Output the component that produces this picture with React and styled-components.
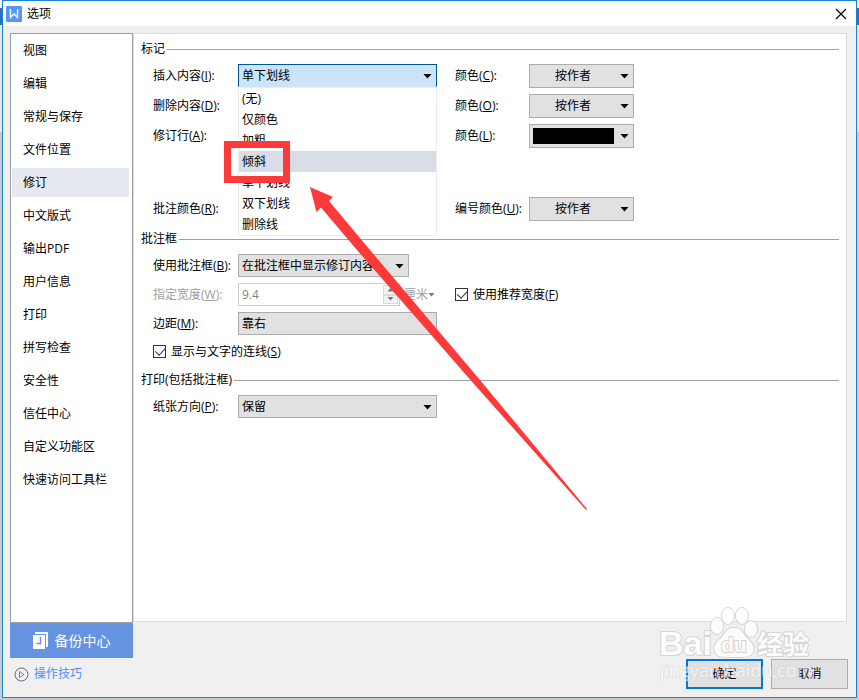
import React, { useState } from 'react';
import styled, { createGlobalStyle } from 'styled-components';

const GlobalStyle = createGlobalStyle`
  * {
    box-sizing: border-box;
  }

  body {
    margin: 0;
  }

  body, button, input, select {
    font-family: "Open Sans", "Noto Sans CJK SC", sans-serif;
    font-size: 12px;
    line-height: 16px;
    color: #000;
  }
`;

const Desktop = styled.div`
  display: flex;
  flex-direction: column;
  min-height: 100vh;
  padding: 0 2px 2px;
  background: linear-gradient(#eef1f5 8px, #2b6cc4 8px, #2b6cc4 25px, #e3e8ee 25px, #e3e8ee 132px, #c6cbd1 132px);
`;

const Window = styled.div`
  position: relative;
  flex: 1;
  display: flex;
  flex-direction: column;
  border: 1px solid #1883d7;
  background: #f0f0f0;
`;

const TitleBar = styled.header`
  display: flex;
  align-items: center;
  gap: 5px;
  height: 25px;
  padding: 0 9px 0 3px;
  background: #fff;
`;

const Title = styled.h1`
  flex: 1;
  margin: 0;
  font-size: 12px;
  font-weight: 400;
`;

const CloseButton = styled.button`
  display: flex;
  padding: 0;
  border: 0;
  background: transparent;
`;

const Body = styled.div`
  flex: 1;
  display: grid;
  grid-template-columns: 123px 1fr;
  grid-template-rows: 1fr auto;
  padding: 7px 9px 8px 7px;
`;

const Sidebar = styled.nav`
  display: flex;
  flex-direction: column;
  gap: 4px;
  padding: 2px 3px 2px 1px;
  border: 1px solid #a0a0a0;
  background: #fff;
`;

const SidebarItem = styled.button`
  height: 29px;
  padding: 0 11px;
  border: 0;
  background: ${(props) => (props.$active ? '#e6eaf0' : 'transparent')};
  text-align: left;
`;

const Panel = styled.main`
  margin-bottom: 1px;
  padding: 7px;
  border: 1px solid #dcdcdc;
  background: #fff;
`;

const Group = styled.section`
  margin-bottom: 10px;
`;

const GroupTitle = styled.h2`
  display: flex;
  align-items: center;
  gap: 2px;
  height: 16px;
  margin: 0 0 7px;
  font-size: 12px;
  font-weight: 400;
  white-space: nowrap;

  &::after {
    content: '';
    flex: 1;
    height: 1px;
    background: #a0a0a0;
  }
`;

const Rows = styled.div`
  display: flex;
  flex-direction: column;
  gap: 6px;
  padding-left: 12px;
`;

const Row = styled.div`
  display: grid;
  grid-template-columns: 85px 199px 92px 105px;
  align-items: start;
  height: ${(props) => props.$height || 23}px;
  margin-top: ${(props) => props.$space || 0}px;
`;

const Label = styled.label`
  line-height: 23px;
  padding-left: ${(props) => (props.$second ? 18 : 0)}px;
  color: ${(props) => (props.$disabled ? '#a0a0a0' : '#000')};
  white-space: nowrap;
`;

const ComboBox = styled.div`
  position: relative;
  width: ${(props) => props.$width};

  > svg {
    position: absolute;
    right: 5px;
    top: 10px;
    pointer-events: none;
  }
`;

const Select = styled.select`
  display: block;
  appearance: none;
  width: 100%;
  height: ${(props) => (props.$centered ? 24 : 23)}px;
  padding: 0 16px 0 ${(props) => (props.$centered ? 25 : 3)}px;
  border: 1px solid #adadad;
  border-radius: 0;
  background: #e1e1e1;
  outline: none;

  &[data-open] {
    border-color: #005499;
    border-bottom-color: #cce4f7;
    background: #cce4f7;
  }
`;

const SwatchButton = styled.button`
  display: block;
  width: 100%;
  height: 24px;
  padding: 3px;
  border: 1px solid #adadad;
  background: #e1e1e1;
`;

const Swatch = styled.span`
  display: block;
  width: 81px;
  height: 16px;
  background: #000;
`;

const Menu = styled.ul`
  position: absolute;
  z-index: 1;
  top: 100%;
  left: 0;
  right: 0;
  margin: 0;
  padding: 0;
  border: 1px solid #ececec;
  background: #fff;
  list-style: none;
`;

const MenuItem = styled.li`
  height: 21px;
  padding-left: 3px;
  line-height: 21px;
  background: ${(props) => (props.$hover ? '#d9dde5' : '#fff')};
`;

const SpinRow = styled.div`
  display: flex;
  align-items: center;
  gap: 4px;
`;

const SpinBox = styled.div`
  display: flex;
  width: 162px;
  height: 23px;
  padding: 1px;
  border: 1px solid #ccc;
`;

const SpinInput = styled.input`
  flex: 1;
  min-width: 0;
  padding: 0 2px;
  border: 0;
  background: #fff;
  color: #838383;
`;

const SpinButtons = styled.div`
  display: grid;
  width: 15px;
`;

const SpinButton = styled.button`
  display: flex;
  align-items: center;
  justify-content: center;
  padding: 0;
  border: 1px solid #dadada;
  background: #f3f3f3;
`;

const UnitButton = styled.button`
  display: flex;
  align-items: center;
  padding: 0;
  border: 0;
  background: transparent;
  color: #a0a0a0;
`;

const CheckLabel = styled.label`
  display: flex;
  align-items: center;
  gap: 5px;
  height: ${(props) => (props.$second ? 23 : 21)}px;
  padding-left: ${(props) => (props.$second ? 18 : 0)}px;
  white-space: nowrap;
`;

const Checkbox = styled.input`
  appearance: none;
  flex: none;
  position: relative;
  width: 13px;
  height: 13px;
  margin: 0;
  border: 1px solid #333;
  background: #fff;

  &:checked::after {
    content: '';
    position: absolute;
    left: 3px;
    top: 0;
    width: 5px;
    height: 8px;
    border: solid #333;
    border-width: 0 1px 1px 0;
    transform: rotate(42deg);
  }
`;

const SideFooter = styled.div`
  display: flex;
  flex-direction: column;
  align-items: flex-start;
  gap: 8px;
  padding-bottom: 7px;
`;

const BackupButton = styled.button`
  display: flex;
  align-items: center;
  justify-content: center;
  gap: 6px;
  width: 100%;
  height: 35px;
  padding: 0;
  border: 0;
  background: #6593e1;
  color: #fff;
  font-size: 14px;
`;

const TipsLink = styled.a`
  display: flex;
  align-items: center;
  gap: 5px;
  padding-left: 4px;
  color: #4a90f2;
  text-decoration: none;
`;

const Actions = styled.div`
  display: flex;
  justify-content: flex-end;
  align-items: flex-end;
  gap: 8px;
  margin-right: -1px;
`;

const ActionButton = styled.button`
  width: 77px;
  height: 30px;
  padding: 0;
  border: ${(props) => (props.$primary ? '2px solid #0078d7' : '1px solid #adadad')};
  background: #e1e1e1;
`;

const Highlight = styled.div`
  position: absolute;
  z-index: 2;
  top: 77px;
  left: -14px;
  width: 66px;
  height: 42px;
  border: 7px solid #fc3a3a;
  pointer-events: none;
`;

const Pointer = styled.svg`
  position: absolute;
  z-index: 3;
  left: 307px;
  top: 186px;
  pointer-events: none;
`;

const Watermark = styled.svg`
  position: absolute;
  z-index: 3;
  right: 34px;
  bottom: 7px;
  pointer-events: none;
`;

const Arrow = ({ color = '#000' }) => (
  <svg width="9" height="5" viewBox="0 0 9 5">
    <path d="M0.500 0h8L4.500 4.500z" fill={color} />
  </svg>
);

const SmallArrow = ({ up }) => (
  <svg width="7" height="4" viewBox="0 0 7 4">
    <path d={up ? 'M0.500 3.500h6L3.500 0z' : 'M0.500 0h6L3.500 3.500z'} fill="#777" />
  </svg>
);

const Logo = () => (
  <svg width="16" height="16" viewBox="0 0 16 16">
    <rect width="16" height="16" rx="1" fill="#5597f7" />
    <path d="M3.500 4h1.500M4.500 4v7.500L8 8l3.500 3.500V4M11 4h1.500" fill="none" stroke="#fff" strokeWidth="1.300" />
  </svg>
);

const Key = ({ letter }) => (
  <>
    (<u>{letter}</u>):
  </>
);

const Combo = ({ id, options = [], width = '100%', centered, children, ...rest }) => (
  <ComboBox $width={width}>
    <Select id={id} $centered={centered} {...rest}>
      {options.map((option) => (
        <option key={option}>{option}</option>
      ))}
    </Select>
    <Arrow />
    {children}
  </ComboBox>
);

const pages = [
  '视图', '编辑', '常规与保存', '文件位置', '修订', '中文版式', '输出PDF',
  '用户信息', '打印', '拼写检查', '安全性', '信任中心', '自定义功能区', '快速访问工具栏',
];

const insertStyles = ['(无)', '仅颜色', '加粗', '倾斜', '单下划线', '双下划线', '删除线'];

const App = () => {
  const [page, setPage] = useState('修订');
  const [hovered, setHovered] = useState('倾斜');

  return (
    <Desktop>
      <GlobalStyle />
      <Window>
        <TitleBar>
          <Logo />
          <Title>选项</Title>
          <CloseButton>
            <svg width="12" height="12" viewBox="0 0 12 12">
              <path d="M1 1l10 10M11 1L1 11" stroke="#000" strokeWidth="1.200" />
            </svg>
          </CloseButton>
        </TitleBar>

        <Body>
          <Sidebar>
            {pages.map((name) => (
              <SidebarItem key={name} $active={name === page} onClick={() => setPage(name)}>
                {name}
              </SidebarItem>
            ))}
          </Sidebar>

          <Panel>
            <Group>
              <GroupTitle>标记</GroupTitle>
              <Rows>
                <Row $height={24}>
                  <Label htmlFor="insert">插入内容<Key letter="I" /></Label>
                  <Combo id="insert" options={['单下划线']} data-open>
                    <Menu role="listbox">
                      {insertStyles.map((name) => (
                        <MenuItem
                          key={name}
                          role="option"
                          $hover={name === hovered}
                          onMouseEnter={() => setHovered(name)}
                        >
                          {name}
                        </MenuItem>
                      ))}
                    </Menu>
                    <Highlight />
                  </Combo>
                  <Label $second htmlFor="insertColor">颜色<Key letter="C" /></Label>
                  <Combo id="insertColor" options={['按作者']} centered />
                </Row>
                <Row $height={24}>
                  <Label htmlFor="remove">删除内容<Key letter="D" /></Label>
                  <Combo id="remove" />
                  <Label $second htmlFor="removeColor">颜色<Key letter="O" /></Label>
                  <Combo id="removeColor" options={['按作者']} centered />
                </Row>
                <Row $height={24}>
                  <Label htmlFor="line">修订行<Key letter="A" /></Label>
                  <Combo id="line" />
                  <Label $second htmlFor="lineColor">颜色<Key letter="L" /></Label>
                  <ComboBox $width="100%">
                    <SwatchButton id="lineColor">
                      <Swatch />
                    </SwatchButton>
                    <Arrow />
                  </ComboBox>
                </Row>
                <Row $height={24} $space={43}>
                  <Label htmlFor="comment">批注颜色<Key letter="R" /></Label>
                  <Combo id="comment" />
                  <Label $second htmlFor="numberColor">编号颜色<Key letter="U" /></Label>
                  <Combo id="numberColor" options={['按作者']} centered />
                </Row>
              </Rows>
            </Group>

            <Group>
              <GroupTitle>批注框</GroupTitle>
              <Rows>
                <Row>
                  <Label htmlFor="balloon">使用批注框<Key letter="B" /></Label>
                  <Combo id="balloon" options={['在批注框中显示修订内容']} width="171px" />
                </Row>
                <Row>
                  <Label $disabled htmlFor="width">指定宽度<Key letter="W" /></Label>
                  <SpinRow>
                    <SpinBox>
                      <SpinInput id="width" defaultValue="9.4" disabled />
                      <SpinButtons>
                        <SpinButton disabled><SmallArrow up /></SpinButton>
                        <SpinButton disabled><SmallArrow /></SpinButton>
                      </SpinButtons>
                    </SpinBox>
                    <UnitButton disabled>
                      厘米
                      <SmallArrow />
                    </UnitButton>
                  </SpinRow>
                  <CheckLabel $second>
                    <Checkbox type="checkbox" defaultChecked />
                    <span>使用推荐宽度(<u>F</u>)</span>
                  </CheckLabel>
                </Row>
                <Row>
                  <Label htmlFor="margin">边距<Key letter="M" /></Label>
                  <Combo id="margin" options={['靠右']} />
                </Row>
                <CheckLabel>
                  <Checkbox type="checkbox" defaultChecked />
                  <span>显示与文字的连线(<u>S</u>)</span>
                </CheckLabel>
              </Rows>
            </Group>

            <Group>
              <GroupTitle>打印(包括批注框)</GroupTitle>
              <Rows>
                <Row>
                  <Label htmlFor="paper">纸张方向<Key letter="P" /></Label>
                  <Combo id="paper" options={['保留']} />
                </Row>
              </Rows>
            </Group>
          </Panel>

          <SideFooter>
            <BackupButton>
              <svg width="16" height="18" viewBox="0 0 16 18">
                <path d="M2 0h13v15h-2V2H2z" fill="#fff" />
                <path d="M0 3h12v14H0z" fill="#fff" />
                <path d="M7.500 5v6.500H3.500" fill="none" stroke="#6593e1" strokeWidth="1.500" />
              </svg>
              备份中心
            </BackupButton>
            <TipsLink href="#tips">
              <svg width="15" height="15" viewBox="0 0 15 15" fill="none">
                <circle cx="7.500" cy="7.500" r="6.500" stroke="#6b6b6b" />
                <path d="M5.500 4.500v6l4.500-3z" stroke="#4a90f2" />
              </svg>
              操作技巧
            </TipsLink>
          </SideFooter>
          <Actions>
            <ActionButton $primary>确定</ActionButton>
            <ActionButton>取消</ActionButton>
          </Actions>
        </Body>

        <Pointer width="280" height="326" viewBox="310 187 280 326" fill="#fc3a3a">
          <path d="M310 187L333 197L329 201L370 250L480 380L587 509L586 510L474 384L357 250L321 207.500L316.500 212z" />
        </Pointer>

        <Watermark width="164" height="84" viewBox="0 0 164 84">
          <g fill="#fff" stroke="#cdcdcd" strokeWidth="2" opacity="0.800" paintOrder="stroke">
            <g fontFamily="Liberation Sans, sans-serif" fontWeight="700">
              <text x="1" y="49" fontSize="34">Bai</text>
              <path d="M76 22c7 0 9 5 13 10c5 5 8 8 6 14c-2 5-7 5-19 5s-17 0-19-5c-2-6 1-9 6-14c4-5 6-10 13-10z" />
              <ellipse cx="59" cy="20" rx="6" ry="8" />
              <ellipse cx="70" cy="10" rx="6" ry="8" />
              <ellipse cx="84" cy="10" rx="6" ry="8" />
              <ellipse cx="93" cy="23" rx="6" ry="8" />
              <text x="63" y="46" fontSize="21">du</text>
            </g>
            <text x="99" y="48" fontSize="26" fontWeight="700" fontFamily="Noto Sans CJK SC, sans-serif">经验</text>
          </g>
          <text x="2" y="71" fontSize="18" fill="#fff" opacity="0.600" stroke="#ccc" strokeWidth="1" paintOrder="stroke" fontFamily="Open Sans, sans-serif">
            jingyan.baidu.com
          </text>
        </Watermark>
      </Window>
    </Desktop>
  );
};

export default App;
